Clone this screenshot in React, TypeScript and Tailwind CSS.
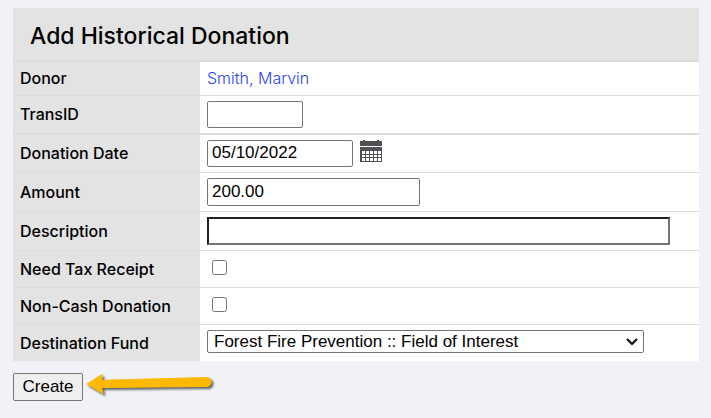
import type { ReactNode } from 'react'
import clsx from 'clsx'

const FIELD =
  'max-w-full border border-[#767676] bg-white px-1 font-["Liberation_Sans",Arial,sans-serif] text-[17px] text-black'

export default function App() {
  return (
    <main className="min-h-screen bg-[#f0f2f8] pt-2 pr-3 pb-4 pl-[13px] font-[Inter,sans-serif] text-black">
      <form onSubmit={(e) => e.preventDefault()}>
        <section className="bg-white">
          <h1 className="border-b-2 border-[#dcdcdc] bg-[#e3e3e3] px-[17px] pt-3 pb-2 text-[23px] leading-8 font-medium">
            Add Historical Donation
          </h1>

          <Row label="Donor">
            <a
              href="#donor"
              className="text-base leading-[23px] font-light text-[#2a3ff5]"
            >
              Smith, Marvin
            </a>
          </Row>
          <Row label="TransID" htmlFor="trans-id" thick>
            <input
              id="trans-id"
              type="text"
              className={clsx(FIELD, 'h-[27px] w-24 rounded-xs')}
            />
          </Row>
          <Row label="Donation Date" htmlFor="donation-date">
            <input
              id="donation-date"
              type="text"
              defaultValue="05/10/2022"
              className={clsx(FIELD, 'h-[27px] w-[146px] rounded-xs pb-0.5')}
            />
            <button
              type="button"
              aria-label="Choose a date"
              className="ml-1.5 self-start"
            >
              <CalendarIcon />
            </button>
          </Row>
          <Row label="Amount" htmlFor="amount">
            <input
              id="amount"
              type="text"
              defaultValue="200.00"
              className={clsx(FIELD, 'h-7 w-[213px] rounded-xs')}
            />
          </Row>
          <Row label="Description" htmlFor="description">
            <input
              id="description"
              type="text"
              className={clsx(
                FIELD,
                'h-7 w-[463px] border-2 border-t-[#1f1f1f] border-l-[#1f1f1f]',
              )}
            />
          </Row>
          <Row label="Need Tax Receipt" htmlFor="tax-receipt">
            <input
              id="tax-receipt"
              type="checkbox"
              className="mx-[5px] mt-1 mb-[7px] size-[15px]"
            />
          </Row>
          <Row label="Non-Cash Donation" htmlFor="non-cash">
            <input
              id="non-cash"
              type="checkbox"
              className="mx-[5px] mt-1 mb-[7px] size-[15px]"
            />
          </Row>
          <Row label="Destination Fund" htmlFor="fund" last>
            <div className="relative mb-[3px] w-[437px] max-w-full">
              <select
                id="fund"
                className={clsx(
                  FIELD,
                  'block h-[23px] w-full appearance-none rounded-xs pl-1.5 leading-5',
                )}
              >
                <option>Forest Fire Prevention :: Field of Interest</option>
              </select>
              <svg
                width="12"
                height="8"
                viewBox="0 0 12 8"
                className="pointer-events-none absolute top-2 right-1.5"
                aria-hidden
              >
                <path
                  d="M1 1L6 6L11 1"
                  fill="none"
                  stroke="#111"
                  strokeWidth="2.200"
                />
              </svg>
            </div>
          </Row>
        </section>

        <div className="mt-3 flex items-start">
          <button
            type="submit"
            className='h-7 w-[70px] rounded-xs border border-[#767676] bg-[#efefef] font-["Liberation_Sans",Arial,sans-serif] text-[17px]'
          >
            Create
          </button>
          <Arrow />
        </div>
      </form>
    </main>
  )
}

function Row({
  label,
  htmlFor,
  thick,
  last,
  children,
}: {
  label: string
  htmlFor?: string
  thick?: boolean
  last?: boolean
  children: ReactNode
}) {
  const labelClass = 'text-base leading-5 font-medium'
  return (
    <div
      className={clsx(
        'flex border-[#dcdcdc]',
        !last && (thick ? 'border-b-2' : 'border-b'),
      )}
    >
      <div className="flex w-[187px] shrink-0 items-center bg-[#e3e3e3] pb-px pl-[7px]">
        {htmlFor ? (
          <label htmlFor={htmlFor} className={labelClass}>
            {label}
          </label>
        ) : (
          <span className={labelClass}>{label}</span>
        )}
      </div>
      <div className="flex min-w-0 flex-1 items-center px-[7px] py-[5px]">
        {children}
      </div>
    </div>
  )
}

function CalendarIcon() {
  return (
    <svg
      width="24"
      height="23"
      viewBox="0 0 24 23"
      shapeRendering="crispEdges"
      aria-hidden
    >
      <path d="M1 1H4V0H6V1H18V0H20V1H23V6H1Z" fill="#505055" />
      <path d="M1 7H23V22H1Z" fill="#505055" />
      <path
        d="M3 11h3v3h-3zM7 11h3v3h-3zM11 11h3v3h-3zM15 11h3v3h-3zM19 11h3v3h-3zM3 15h3v2h-3zM7 15h3v2h-3zM11 15h3v2h-3zM15 15h3v2h-3zM19 15h3v2h-3zM3 18h3v3h-3zM7 18h3v3h-3zM11 18h3v3h-3zM15 18h3v3h-3zM19 18h3v3h-3z"
        fill="#fff"
      />
    </svg>
  )
}

function Arrow() {
  return (
    <svg
      width="134"
      height="28"
      viewBox="0 0 134 28"
      className="ml-1 shrink-0 drop-shadow-[2px_2px_1px_#00000099]"
      aria-hidden
    >
      <path
        d="M0 11L15 1.500L14.500 7.300L119 4.500Q124 4.500 124 9Q124 13.500 119 13.500L14.500 14.500L16 20.500Z"
        fill="#fdb900"
        stroke="#fdb900"
        strokeLinejoin="round"
      />
    </svg>
  )
}
